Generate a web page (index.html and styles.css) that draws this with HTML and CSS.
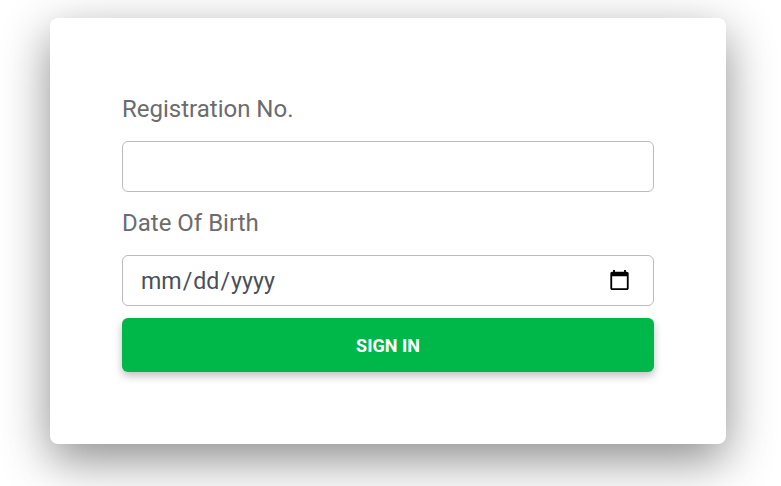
FILE: index.html
```html
<!DOCTYPE html>
<html lang="en">

<head>
    <meta charset="UTF-8">
    <meta name="viewport" content="width=device-width, initial-scale=1.0">
    <title>Sign in</title>
    <link rel="stylesheet" href="styles.css">
</head>

<body>
    <div class="card">
        <form class="form">
            <label class="label" for="regno">Registration No.</label>
            <input class="field" id="regno" type="text">

            <label class="label" for="dob">Date Of Birth</label>
            <input class="field" id="dob" type="date">

            <button class="signin" type="button">SIGN IN</button>
        </form>
    </div>
</body>

</html>
```

FILE: styles.css
```css
html {
    background: #fff;
}

body {
    margin: 0;
    height: 486px;
    overflow: hidden;
    font-family: Roboto, sans-serif;
    background: #fff;
}

.card {
    box-sizing: border-box;
    width: 676px;
    height: 426px;
    margin: 18px 0 0 50px;
    padding: 77px 72px 0;
    background: #fff;
    border-radius: 8px;
    box-shadow: 0 16px 48px rgba(0, 0, 0, .45);
}

.form {
    display: flex;
    flex-direction: column;
}

.label {
    margin-bottom: 17px;
    font-size: 24px;
    line-height: 29px;
    color: #6c6c6c;
}

.field {
    box-sizing: border-box;
    width: 100%;
    height: 51px;
    margin-bottom: 17px;
    padding: 0 20px 0 17px;
    font-family: Roboto, sans-serif;
    font-size: 23.2px;
    color: #495057;
    background: #fff;
    border: 1px solid #bbb;
    border-radius: 6px;
}

#dob {
    margin-bottom: 12px;
}

.signin {
    height: 54px;
    font-family: Roboto, sans-serif;
    font-size: 18px;
    font-weight: 700;
    color: #fff;
    background: #00b74a;
    border: 0;
    border-radius: 6px;
    box-shadow: 0 4px 8px rgba(0, 0, 0, .25);
}
```
